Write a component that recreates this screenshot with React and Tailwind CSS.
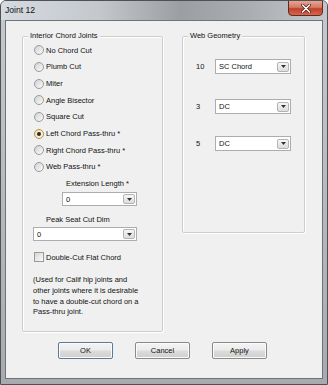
import { useState } from 'react'

const OPTIONS = [
  'No Chord Cut',
  'Plumb Cut',
  'Miter',
  'Angle Bisector',
  'Square Cut',
  'Left Chord Pass-thru *',
  'Right Chord Pass-thru *',
  'Web Pass-thru *',
]

function Radio({ label, checked, onClick }) {
  return (
    <div className="h-[16.66px] flex items-center gap-[2px] cursor-default" onClick={onClick}>
      <span
        className={`w-[10px] h-[10px] rounded-full border flex items-center justify-center ${
          checked
            ? 'border-[#b0904a] bg-gradient-to-br from-[#f7e3b0] to-[#fdf6e2]'
            : 'border-[#9a9a9a] bg-gradient-to-br from-[#d2d2d2] to-[#fbfbfb]'
        }`}
      >
        {checked && <span className="w-[4px] h-[4px] rounded-full bg-[#2a2a2a]" />}
      </span>
      <span>{label}</span>
    </div>
  )
}

function Combo({ value, className }) {
  return (
    <div className={`h-[14px] border border-[#abadb3] bg-white flex items-center justify-between pl-[3px] pr-[1px] ${className}`}>
      <span className="leading-none">{value}</span>
      <span className="w-[12px] h-[10px] border border-[#b4b4b4] rounded-[2px] bg-gradient-to-b from-[#f6f6f6] to-[#dcdcdc] flex items-center justify-center">
        <svg width="5" height="3" viewBox="0 0 5 3">
          <path d="M0 0h5L2.5 3z" fill="#333" />
        </svg>
      </span>
    </div>
  )
}

function Group({ title, className, children }) {
  return (
    <div className={`relative border border-[#cdcdcd] rounded-[2px] shadow-[inset_1px_1px_0_#fff,1px_1px_0_#fff] ${className}`}>
      <span className="absolute -top-[6px] left-[5px] px-[2px] bg-[#f0f0f0] leading-[10px]">{title}</span>
      {children}
    </div>
  )
}

function Button({ label, primary }) {
  return (
    <button
      className={`w-[55px] h-[17px] rounded-[2px] border text-[7.5px] leading-none text-[#111] bg-[linear-gradient(#f4f4f4_0%,#ebebeb_48%,#dcdcdc_52%,#cfcfcf_100%)] shadow-[inset_0_0_0_1px_#fbfbfb] ${
        primary ? 'border-[#5a7a98]' : 'border-[#8a8a8a]'
      }`}
    >
      {label}
    </button>
  )
}

export default function App() {
  const [cut, setCut] = useState(5)
  const [doubleCut, setDoubleCut] = useState(false)

  return (
    <div
      className="w-[328px] h-[385px] flex flex-col rounded-t-[6px] border border-[#4e5256] bg-gradient-to-b from-[#c6cacf] to-[#a7abaf] text-[7.5px] text-[#111] overflow-hidden"
      style={{ fontFamily: '"Liberation Sans", Arial, sans-serif' }}
    >
      <div className="relative h-[19px] shrink-0 flex items-center pl-[4px] bg-[linear-gradient(90deg,#d6dbe1_0%,#c4c8cd_30%,#9b9ea2_55%,#a9acb0_75%,#c3c7cb_100%)]">
        <span className="text-[8.6px] text-[#111]">Joint 12</span>
        <div className="absolute top-[-1px] right-[4px] w-[35px] h-[16px] rounded-b-[4px] border border-[#5e2a22] bg-[linear-gradient(#e8a493_0%,#d47a66_45%,#c2402a_55%,#d5664c_100%)] flex items-center justify-center">
          <svg width="10" height="9" viewBox="0 0 10 9">
            <path d="M1.5 1l7 7M8.5 1l-7 7" stroke="#4a1a14" strokeWidth="3" strokeLinecap="round" />
            <path d="M1.5 1l7 7M8.5 1l-7 7" stroke="#fff" strokeWidth="1.6" strokeLinecap="round" />
          </svg>
        </div>
      </div>

      <div className="mx-[4px] mb-[5px] flex-1 border border-[#6f7377] bg-[#f0f0f0] flex flex-col">
        <div className="flex pt-[15px] pl-[16px] gap-[19px]">
          <Group title="Interior Chord Joints" className="w-[141px] h-[296px] flex flex-col pt-[5px] pl-[11px]">
            {OPTIONS.map((o, i) => (
              <Radio key={o} label={o} checked={cut === i} onClick={() => setCut(i)} />
            ))}
            <div className="mt-[4px] ml-[32px] leading-[10px]">Extension Length *</div>
            <Combo value="0" className="mt-[3px] ml-[28px] w-[75px]" />
            <div className="mt-[9px] ml-[12px] leading-[10px]">Peak Seat Cut Dim</div>
            <Combo value="0" className="mt-[2px] -ml-[1px] w-[104px]" />
            <div className="mt-[11px] h-[10px] flex items-center gap-[2px]" onClick={() => setDoubleCut(d => !d)}>
              <span className="w-[10px] h-[10px] border border-[#9a9a9a] bg-gradient-to-br from-[#d6d6d6] to-[#fbfbfb] flex items-center justify-center">
                {doubleCut && (
                  <svg width="7" height="6" viewBox="0 0 7 6">
                    <path d="M0.5 3l2 2 4-4.5" stroke="#333" strokeWidth="1.3" fill="none" />
                  </svg>
                )}
              </span>
              <span>Double-Cut Flat Chord</span>
            </div>
            <p className="mt-[13px] -ml-[1px] leading-[10.67px]">
              (Used for Calif hip joints and
              <br />
              other joints where it is desirable
              <br />
              to have a double-cut chord on a
              <br />
              Pass-thru joint.
            </p>
          </Group>

          <Group title="Web Geometry" className="w-[123px] h-[197px] flex flex-col pt-[22px] pl-[13px]">
            {[
              ['10', 'SC Chord', 'mt-0'],
              ['3', 'DC', 'mt-[25px]'],
              ['5', 'DC', 'mt-[22px]'],
            ].map(([n, v, m]) => (
              <div key={n} className={`flex items-center ${m}`}>
                <span className="w-[19px]">{n}</span>
                <Combo value={v} className="w-[76px] h-[15px]" />
              </div>
            ))}
          </Group>
        </div>

        <div className="flex gap-[22px] pl-[52px] mt-[10px]">
          <Button label="OK" primary />
          <Button label="Cancel" />
          <Button label="Apply" />
        </div>
      </div>
    </div>
  )
}
